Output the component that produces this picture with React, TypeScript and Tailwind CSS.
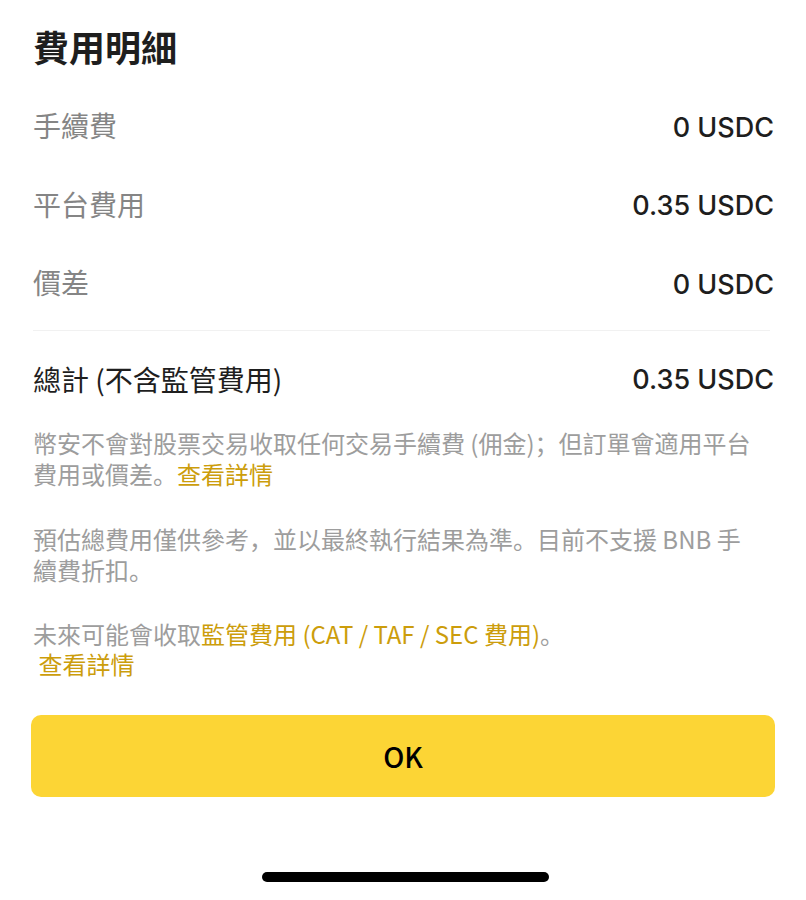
const cjk = "font-['Noto_Sans_CJK_SC','Noto_Sans_CJK_TC',sans-serif]";
const num = "font-['Inter','Noto_Sans_CJK_SC',sans-serif]";

type FeeRow = { label: string; value: string };

const rows: FeeRow[] = [
  { label: "手續費", value: "0 USDC" },
  { label: "平台費用", value: "0.35 USDC" },
  { label: "價差", value: "0 USDC" },
];

function Link({ children }: { children: React.ReactNode }) {
  return <span className="text-[#cc9d0b]">{children}</span>;
}

export default function App() {
  return (
    <div className={`w-[806px] h-[900px] bg-white flex flex-col px-[33px] ${cjk}`}>
      <h1 className="pt-[28px] text-[36px] leading-[36px] font-bold text-[#1e1e1e] mb-[22px]">
        費用明細
      </h1>

      {rows.map((r) => (
        <div key={r.label} className="h-[78.5px] flex items-center justify-between">
          <span className="text-[28px] text-[#858585]">{r.label}</span>
          <span className={`${num} pt-[5px] text-[27px] font-medium text-[#1e1e1e] -mr-[1px]`}>
            {r.value}
          </span>
        </div>
      ))}

      <div className="mt-[8px] h-px bg-[#f1f1f1] mr-[3px]" />

      <div className="h-[96px] flex items-center justify-between">
        <span className="text-[28px] text-[#1e1e1e]">總計 (不含監管費用)</span>
        <span className={`${num} pt-[4px] text-[27px] font-medium text-[#1e1e1e] -mr-[1px]`}>
          0.35 USDC
        </span>
      </div>

      <div className="flex flex-col gap-[34px] text-[24px] leading-[31px] text-[#9d9d9d]">
        <p>
          幣安不會對股票交易收取任何交易手續費 (佣金)；但訂單會適用平台
          <br />
          費用或價差。<Link>查看詳情</Link>
        </p>
        <p>
          預估總費用僅供參考，並以最終執行結果為準。目前不支援 BNB 手
          <br />
          續費折扣。
        </p>
        <p className="leading-[30px]">
          未來可能會收取<Link>監管費用 (CAT / TAF / SEC 費用)</Link>。
          <br />
          <Link>&nbsp;查看詳情</Link>
        </p>
      </div>

      <button className="mt-[36px] h-[82px] w-[744px] -ml-[2px] rounded-[10px] bg-[#fcd535] text-[28px] text-black font-medium">
        OK
      </button>

      <div className="mt-[75px] flex justify-center">
        <div className="w-[287px] h-[10px] rounded-full bg-black ml-[4px]" />
      </div>
    </div>
  );
}
